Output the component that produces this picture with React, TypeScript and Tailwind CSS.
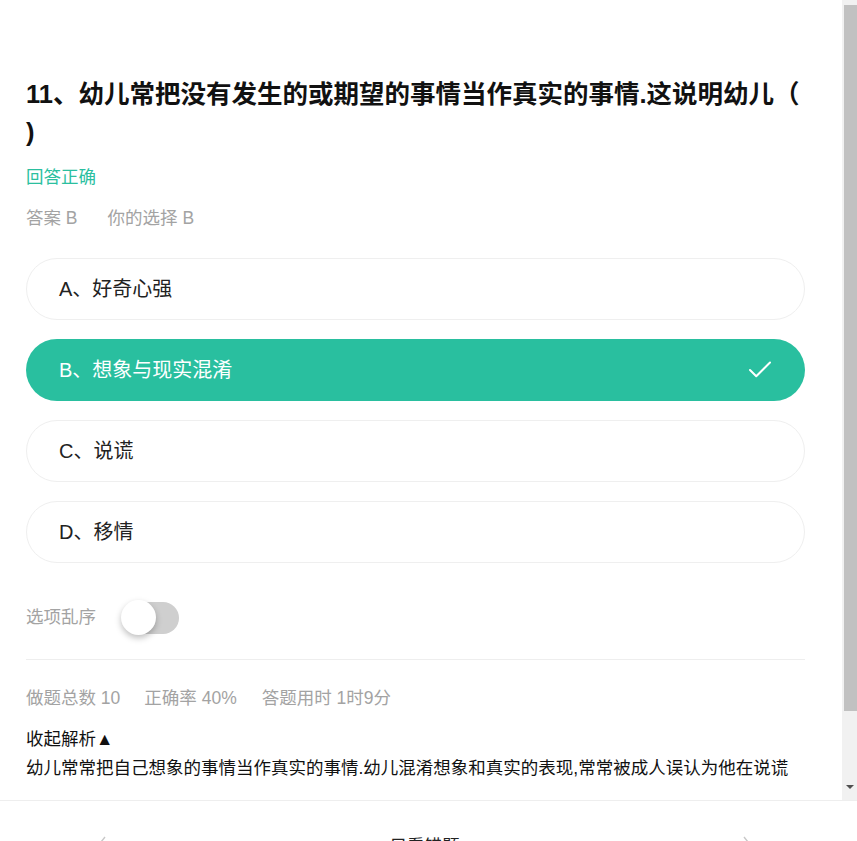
import { Check } from "lucide-react"

const options = [
  { key: "A", text: "好奇心强" },
  { key: "B", text: "想象与现实混淆" },
  { key: "C", text: "说谎" },
  { key: "D", text: "移情" },
]

const selected = "B"

export default function App() {
  return (
    <div
      className="h-[841px] w-full overflow-hidden bg-white flex flex-col"
      style={{ fontFamily: '"Liberation Sans", "Noto Sans CJK SC", sans-serif' }}
    >
      {/* question area with its scrollbar */}
      <div className="h-[800px] shrink-0 flex">
        <div className="flex-1 overflow-hidden">
          <div className="ml-[26px] w-[779px] pt-[75px]">
            {/* question title */}
            <h1 className="text-[25.5px] leading-[38px] font-bold text-[#111]">
              <span className="whitespace-nowrap">11、幼儿常把没有发生的或期望的事情当作真实的事情.这说明幼儿（</span>
              <br />
              <span>)</span>
            </h1>

            <div className="mt-[13px] text-[17.5px] leading-[26px] text-[#2bbf9f]">回答正确</div>

            <div className="mt-[15px] flex text-[17.5px] leading-[26px] text-[#a3a3a3]">
              <span className="mr-[30px]">答案 B</span>
              <span>你的选择 B</span>
            </div>

            {/* options */}
            <div className="mt-[27px] flex flex-col gap-[19px]">
              {options.map((o) => {
                const active = o.key === selected
                return (
                  <div
                    key={o.key}
                    className={
                      active
                        ? "h-[62px] rounded-full bg-[#29bf9f] flex items-center justify-between pl-[33px] pr-[30px] text-white"
                        : "h-[62px] rounded-full border border-[#efefef] flex items-center pl-[32px] text-[#222]"
                    }
                  >
                    <span className="text-[20px]">
                      {o.key}、{o.text}
                    </span>
                    {active && <Check className="w-[30px] h-[30px] text-white" strokeWidth={1.6} />}
                  </div>
                )
              })}
            </div>

            {/* shuffle toggle */}
            <div className="mt-[37px] flex items-center h-[35px]">
              <span className="text-[17.5px] text-[#a3a3a3]">选项乱序</span>
              <div className="relative ml-[26px] w-[57px] h-[32px] rounded-full bg-[#cfcfcf]">
                <div className="absolute -left-[1px] -top-[1.5px] w-[35px] h-[35px] rounded-full bg-white shadow-[0_3px_6px_rgba(0,0,0,0.25)]" />
              </div>
            </div>

            <div className="mt-[24px] h-px bg-[#eeeeee]" />

            {/* stats */}
            <div className="mt-[25px] flex text-[17.5px] leading-[26px] text-[#a3a3a3]">
              <span className="mr-[24px]">做题总数 10</span>
              <span className="mr-[25px]">正确率 40%</span>
              <span>答题用时 1时9分</span>
            </div>

            {/* analysis */}
            <div className="mt-[14px] text-[17.5px] leading-[29px] text-[#111]">
              <div>收起解析▲</div>
              <div className="whitespace-nowrap">
                幼儿常常把自己想象的事情当作真实的事情.幼儿混淆想象和真实的表现,常常被成人误认为他在说谎
              </div>
            </div>
          </div>
        </div>

        {/* scrollbar */}
        <div className="w-[15px] shrink-0 bg-[#f1f1f1] flex flex-col items-center pt-[5px]">
          <div className="w-[13px] ml-[2px] h-[706px] bg-[#c1c1c1]" />
          <div className="mt-[74px] w-0 h-0 border-x-[4px] border-x-transparent border-t-[4px] border-t-[#505050]" />
        </div>
      </div>

      {/* bottom pager */}
      <div className="h-[92px] shrink-0 border-t border-[#eeeeee] flex items-center justify-between pl-[96px] pr-[104px]">
        <svg width="10" height="22" viewBox="0 0 10 22" fill="none">
          <path d="M9 1 L1 11 L9 21" stroke="#c8c8c8" strokeWidth="1.4" />
        </svg>
        <span className="text-[17.5px] text-[#222]">只看错题</span>
        <svg width="10" height="22" viewBox="0 0 10 22" fill="none">
          <path d="M1 1 L9 11 L1 21" stroke="#c8c8c8" strokeWidth="1.4" />
        </svg>
      </div>
    </div>
  )
}
